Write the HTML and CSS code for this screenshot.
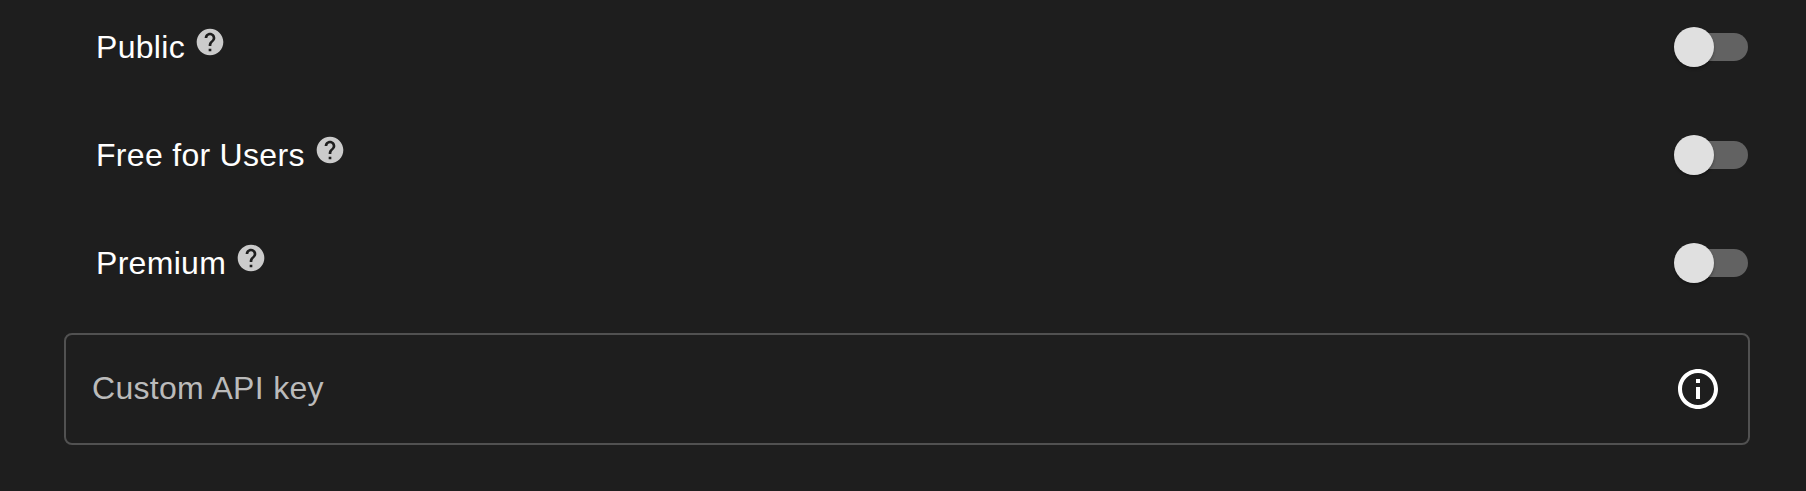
FILE: index.html
```html
<!DOCTYPE html>
<html lang="en">
<head>
<meta charset="utf-8">
<title>Settings</title>
<link rel="stylesheet" href="styles.css">
</head>
<body>
<svg class="defs" aria-hidden="true">
  <symbol id="help" viewBox="0 0 24 24"><path d="M12 2C6.48 2 2 6.48 2 12s4.48 10 10 10 10-4.48 10-10S17.52 2 12 2zm1 17h-2v-2h2v2zm2.07-7.75l-.9.92C13.45 12.9 13 13.5 13 15h-2v-.5c0-1.1.45-2.1 1.17-2.83l1.24-1.26c.37-.36.59-.86.59-1.41 0-1.1-.9-2-2-2s-2 .9-2 2H8c0-2.21 1.79-4 4-4s4 1.79 4 4c0 .88-.36 1.68-.93 2.25z"/></symbol>
</svg>
<main class="panel">
  <div class="options">
    <div class="option">
      <span class="label">Public</span>
      <svg class="help"><use href="#help"/></svg>
      <span class="switch" role="switch" aria-checked="false" aria-label="Public"><span class="thumb"></span></span>
    </div>
    <div class="option">
      <span class="label">Free for Users</span>
      <svg class="help"><use href="#help"/></svg>
      <span class="switch" role="switch" aria-checked="false" aria-label="Free for Users"><span class="thumb"></span></span>
    </div>
    <div class="option">
      <span class="label">Premium</span>
      <svg class="help"><use href="#help"/></svg>
      <span class="switch" role="switch" aria-checked="false" aria-label="Premium"><span class="thumb"></span></span>
    </div>
  </div>
  <div class="field">
    <span class="placeholder">Custom API key</span>
    <svg class="info" viewBox="0 0 24 24"><path d="M11 7h2v2h-2zm0 4h2v6h-2zm1-9C6.48 2 2 6.48 2 12s4.48 10 10 10 10-4.48 10-10S17.52 2 12 2zm0 18c-4.41 0-8-3.59-8-8s3.59-8 8-8 8 3.59 8 8-3.59 8-8 8z"/></svg>
  </div>
</main>
</body>
</html>
```
FILE: styles.css
```css
* {
  box-sizing: border-box;
}

body {
  margin: 0;
  background: #1e1e1e;
  color: #fff;
  font: 32px/40px "Liberation Sans", Helvetica, Arial, sans-serif;
  letter-spacing: 0.3px;
}

.defs {
  display: none;
}

.panel {
  height: 491px;
  padding: 27px 56px 0 64px;
}

.options {
  display: grid;
  gap: 68px;
  padding: 0 2px 0 32px;
}

.option {
  display: flex;
  align-items: center;
  height: 40px;
}

.help {
  width: 32px;
  height: 32px;
  margin: 0 0 10px 9px;
  fill: #cbcbcb;
}

.switch {
  display: flex;
  align-items: center;
  width: 68px;
  height: 28px;
  margin-left: auto;
  border-radius: 14px;
  background: #626262;
}

.thumb {
  flex: none;
  width: 40px;
  height: 40px;
  margin-left: -6px;
  border-radius: 50%;
  background: #e0e0e0;
  box-shadow: 0 2px 3px rgba(0, 0, 0, 0.3);
}

.field {
  display: flex;
  align-items: center;
  justify-content: space-between;
  height: 112px;
  margin-top: 50px;
  padding: 0 26px;
  border: 2px solid #515151;
  border-radius: 8px;
}

.placeholder {
  padding-bottom: 2px;
  color: #bbb;
}

.info {
  width: 48px;
  height: 48px;
  fill: #fff;
}
```
